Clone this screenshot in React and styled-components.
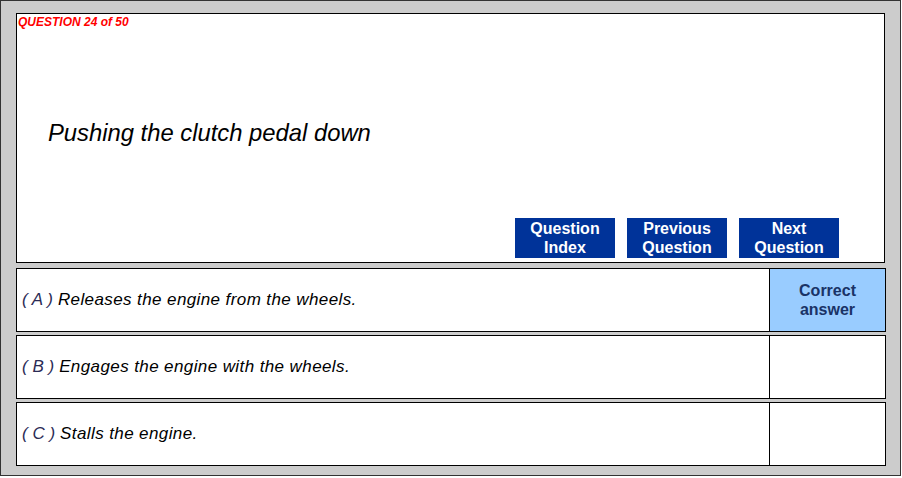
import React from 'react';
import styled, { createGlobalStyle } from 'styled-components';

const GlobalStyle = createGlobalStyle`
  html, body {
    margin: 0;
    padding: 0;
    background: #ffffff;
  }
  body {
    font-family: "Liberation Sans", Arial, sans-serif;
  }
`;

const Frame = styled.div`
  box-sizing: border-box;
  width: 901px;
  height: 476px;
  border: 1px solid #333;
  background: #cccccc;
  padding: 12px 14px 9px 15px;
  display: flex;
  flex-direction: column;
`;

const QuestionPanel = styled.div`
  box-sizing: border-box;
  height: 250px;
  width: 869px;
  background: #fff;
  border: 1px solid #000;
  display: flex;
  flex-direction: column;
  margin-bottom: 5px;
`;

const Counter = styled.div`
  color: #ff0000;
  font-size: 12px;
  font-weight: bold;
  font-style: italic;
  padding: 1px 0 0 1px;
  line-height: 14px;
`;

const QuestionText = styled.div`
  flex: 1;
  font-size: 23.8px;
  font-style: italic;
  color: #000;
  padding: 90px 0 0 31px;
`;

const NavBar = styled.div`
  display: flex;
  justify-content: flex-end;
  gap: 12px;
  padding: 0 45px 4px 0;
`;

const NavButton = styled.div`
  width: 100px;
  height: 40px;
  background: #003399;
  color: #fff;
  font-weight: bold;
  font-size: 16px;
  line-height: 19px;
  text-align: center;
  display: flex;
  align-items: center;
  justify-content: center;
`;

const AnswerList = styled.div`
  display: flex;
  flex-direction: column;
  gap: 3px;
`;

const AnswerRow = styled.div`
  box-sizing: border-box;
  height: 64px;
  width: 870px;
  border: 1px solid #000;
  background: #fff;
  display: flex;
`;

const AnswerText = styled.div`
  flex: 1;
  display: flex;
  align-items: center;
  padding-left: 5px;
  font-size: 17px;
  letter-spacing: 0.4px;
  font-style: italic;
  color: #000;
`;

const Letter = styled.span`
  color: #2b2b55;
  letter-spacing: 0;
  margin-right: 5px;
`;

const Verdict = styled.div`
  width: 115px;
  border-left: 1px solid #000;
  background: ${p => (p.$correct ? '#99ccff' : '#fff')};
  color: #1a3366;
  font-weight: bold;
  font-size: 16px;
  line-height: 19px;
  text-align: center;
  display: flex;
  align-items: center;
  justify-content: center;
`;

const answers = [
  { letter: 'A', text: 'Releases the engine from the wheels.', correct: true },
  { letter: 'B', text: 'Engages the engine with the wheels.', correct: false },
  { letter: 'C', text: 'Stalls the engine.', correct: false },
];

export default function App() {
  return (
    <>
      <GlobalStyle />
      <Frame>
        <QuestionPanel>
          <Counter>QUESTION 24 of 50</Counter>
          <QuestionText>Pushing the clutch pedal down</QuestionText>
          <NavBar>
            <NavButton>Question<br />Index</NavButton>
            <NavButton>Previous<br />Question</NavButton>
            <NavButton>Next<br />Question</NavButton>
          </NavBar>
        </QuestionPanel>
        <AnswerList>
          {answers.map(a => (
            <AnswerRow key={a.letter}>
              <AnswerText>
                <Letter>( {a.letter} )</Letter>
                <span>{a.text}</span>
              </AnswerText>
              <Verdict $correct={a.correct}>
                {a.correct ? <>Correct<br />answer</> : null}
              </Verdict>
            </AnswerRow>
          ))}
        </AnswerList>
      </Frame>
    </>
  );
}
